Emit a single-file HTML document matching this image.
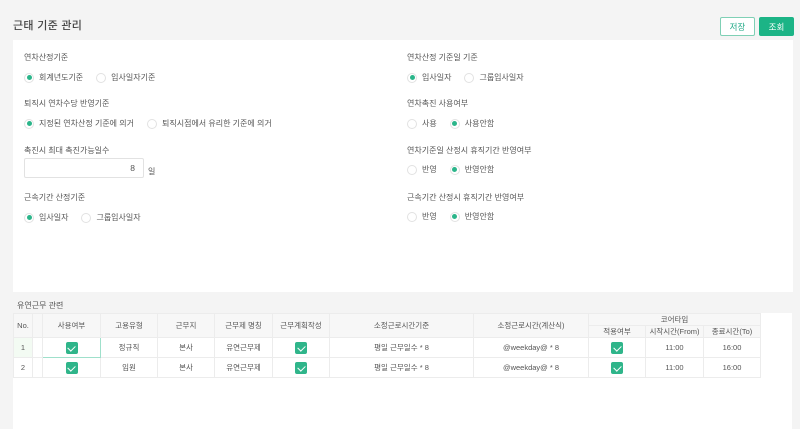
<!DOCTYPE html>
<html><head><meta charset="utf-8"><style>
*{box-sizing:border-box;margin:0;padding:0}
body{width:800px;height:429px;background:#f4f4f4;font-family:"Liberation Sans","Noto Sans CJK KR",sans-serif;color:#555;font-size:8.5px;position:relative;overflow:hidden}
.abs{position:absolute}
.title{left:13px;top:17px;font-size:11px;color:#444;font-weight:500;letter-spacing:0.3px}
.btn{top:17px;height:19px;width:35px;border-radius:2px;font-size:8.5px;display:flex;align-items:center;justify-content:center}
.card{left:13px;top:40px;width:780px;height:252px;background:#fff}
.lbl{font-size:8px;color:#555}
.radios{display:flex;align-items:center;font-size:8px;color:#555}
.r{width:10px;height:10px;border-radius:50%;border:1px solid #e2e2e2;margin-right:5px;display:inline-flex;align-items:center;justify-content:center}
.r.on::after{content:"";width:5px;height:5px;border-radius:50%;background:#2bb58a}
.opt{display:flex;align-items:center;margin-right:13px}
.card2{left:13px;top:313px;width:779px;height:116px;background:#fff}
table{border-collapse:collapse;position:absolute;left:13px;top:313px;font-size:7.5px;color:#555}
td{border:1px solid #ececec;text-align:center;padding:0}
.h td{background:#f7f7f7}
.cb{display:inline-block;width:12px;height:12px;background:#2fb58a;border-radius:2px;vertical-align:middle;position:relative}
.cb::after{content:"";position:absolute;left:3.5px;top:2px;width:4px;height:6px;border:solid #fff;border-width:0 1.5px 1.5px 0;transform:rotate(45deg)}
</style></head><body>
<div class="abs title">근태 기준 관리</div>
<div class="abs btn" style="left:720px;border:1px solid #7fd0b5;color:#2a8;background:#fff">저장</div>
<div class="abs btn" style="left:759px;background:#1cb486;color:#fff">조회</div>
<div class="abs card"></div>

<div class="abs lbl" style="left:24px;top:52px">연차산정기준</div>
<div class="abs radios" style="left:24px;top:72px"><span class="opt"><span class="r on"></span>회계년도기준</span><span class="opt"><span class="r"></span>입사일자기준</span></div>
<div class="abs lbl" style="left:24px;top:98px">퇴직시 연차수당 반영기준</div>
<div class="abs radios" style="left:24px;top:118px"><span class="opt"><span class="r on"></span>지정된 연차산정 기준에 의거</span><span class="opt"><span class="r"></span>퇴직시점에서 유리한 기준에 의거</span></div>
<div class="abs lbl" style="left:24px;top:145px">촉진시 최대 촉진가능일수</div>
<div class="abs" style="left:24px;top:158px;width:120px;height:20px;border:1px solid #e2e2e2;border-radius:2px;text-align:right;padding-right:8px;line-height:18px;font-size:8.5px">8</div>
<div class="abs lbl" style="left:148px;top:166px">일</div>
<div class="abs lbl" style="left:24px;top:192px">근속기간 산정기준</div>
<div class="abs radios" style="left:24px;top:212px"><span class="opt"><span class="r on"></span>입사일자</span><span class="opt"><span class="r"></span>그룹입사일자</span></div>

<div class="abs lbl" style="left:407px;top:52px">연차산정 기준일 기준</div>
<div class="abs radios" style="left:407px;top:72px"><span class="opt"><span class="r on"></span>입사일자</span><span class="opt"><span class="r"></span>그룹입사일자</span></div>
<div class="abs lbl" style="left:407px;top:98px">연차촉진 사용여부</div>
<div class="abs radios" style="left:407px;top:118px"><span class="opt"><span class="r"></span>사용</span><span class="opt"><span class="r on"></span>사용안함</span></div>
<div class="abs lbl" style="left:407px;top:145px">연차기준일 산정시 휴직기간 반영여부</div>
<div class="abs radios" style="left:407px;top:164px"><span class="opt"><span class="r"></span>반영</span><span class="opt"><span class="r on"></span>반영안함</span></div>
<div class="abs lbl" style="left:407px;top:192px">근속기간 산정시 휴직기간 반영여부</div>
<div class="abs radios" style="left:407px;top:211px"><span class="opt"><span class="r"></span>반영</span><span class="opt"><span class="r on"></span>반영안함</span></div>

<div class="abs" style="left:17px;top:300px;font-size:8px;color:#555">유연근무 관련</div>
<div class="abs card2"></div>
<table>
<colgroup><col style="width:19px"><col style="width:10px"><col style="width:58px"><col style="width:57px"><col style="width:57px"><col style="width:58px"><col style="width:57px"><col style="width:144px"><col style="width:115px"><col style="width:57px"><col style="width:58px"><col style="width:57px"></colgroup>
<tr class="h" style="height:12px"><td rowspan="2">No.</td><td rowspan="2"></td><td rowspan="2">사용여부</td><td rowspan="2">고용유형</td><td rowspan="2">근무지</td><td rowspan="2">근무제 명칭</td><td rowspan="2">근무계획작성</td><td rowspan="2">소정근로시간기준</td><td rowspan="2">소정근로시간(계산식)</td><td colspan="3">코어타임</td></tr>
<tr class="h" style="height:12px"><td>적용여부</td><td>시작시간(From)</td><td>종료시간(To)</td></tr>
<tr style="height:20px"><td style="background:#f3fbf3">1</td><td></td><td style="border:1px solid #9fe0cb"><span class="cb"></span></td><td>정규직</td><td>본사</td><td>유연근무제</td><td><span class="cb"></span></td><td>평일 근무일수 * 8</td><td>@weekday@ * 8</td><td><span class="cb"></span></td><td>11:00</td><td>16:00</td></tr>
<tr style="height:20px"><td>2</td><td></td><td><span class="cb"></span></td><td>임원</td><td>본사</td><td>유연근무제</td><td><span class="cb"></span></td><td>평일 근무일수 * 8</td><td>@weekday@ * 8</td><td><span class="cb"></span></td><td>11:00</td><td>16:00</td></tr>
</table>
</body></html>
